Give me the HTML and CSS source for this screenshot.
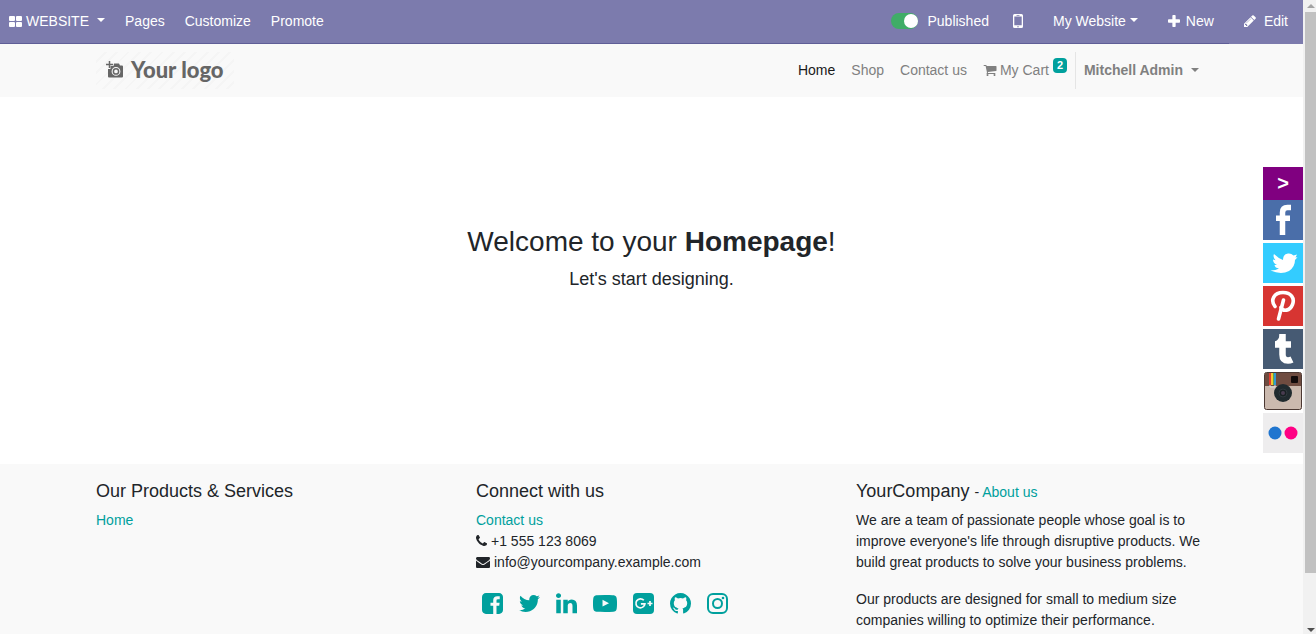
FILE: index.html
```html
<!DOCTYPE html>
<html lang="en">
<head>
<meta charset="utf-8">
<title>Home | My Website</title>
<link rel="stylesheet" href="styles.css">
</head>
<body>
<div class="page">
  <header class="topbar">
    <nav class="topbar-menu" aria-label="Website menu">
      <button class="top-link brand" type="button">
        <svg width="13" height="11" viewBox="0 0 13 11" fill="currentColor"><rect width="6" height="5" rx="1"/><rect x="7" width="6" height="5" rx="1"/><rect y="6" width="6" height="5" rx="1"/><rect x="7" y="6" width="6" height="5" rx="1"/></svg>
        WEBSITE <span class="caret caret-spaced"></span>
      </button>
      <a class="top-link" href="#">Pages</a>
      <a class="top-link" href="#">Customize</a>
      <a class="top-link" href="#">Promote</a>
    </nav>
    <div class="topbar-tools">
      <label class="publish"><input class="switch" type="checkbox" checked>Published</label>
      <button class="tool" type="button" aria-label="Mobile preview">
        <svg width="10" height="14" viewBox="0 0 10 14"><path fill="currentColor" fill-rule="evenodd" d="M1.500 0h7Q10 0 10 1.500v11Q10 14 8.500 14h-7Q0 14 0 12.500v-11Q0 0 1.500 0zM1.300 2.500v8.800h7.400V2.500zM3.500 1v.7h3V1zM5 12a.7.7 0 100 1.400.7.7 0 000-1.400z"/></svg>
      </button>
      <button class="tool" type="button">My Website<span class="caret"></span></button>
      <button class="tool tool-new" type="button">
        <svg width="12" height="12" viewBox="192 128 1408 1408" fill="currentColor"><path d="M1600 736v192q0 40-28 68t-68 28h-416v416q0 40-28 68t-68 28h-192q-40 0-68-28t-28-68v-416h-416q-40 0-68-28t-28-68v-192q0-40 28-68t68-28h416v-416q0-40 28-68t68-28h192q40 0 68 28t28 68v416h416q40 0 68 28t28 68z"/></svg>
        New
      </button>
      <button class="tool tool-edit" type="button">
        <svg width="13" height="14" viewBox="128 0 1664 1792" fill="currentColor"><path d="M491 1536l91-91-235-235-91 91v107h128v128h107zm523-928q0-22-22-22-10 0-17 7l-542 542q-7 7-7 17 0 22 22 22 10 0 17-7l542-542q7-7 7-17zm-54-192l416 416-832 832h-416v-416zm683 96q0 53-37 90l-166 166-416-416 166-165q36-38 90-38 53 0 91 38l235 234q37 39 37 91z"/></svg>
        Edit
      </button>
    </div>
  </header>

  <div class="site-header">
    <div class="container site-nav">
      <a class="logo" href="#">
        <svg width="18" height="18" viewBox="0 0 18 18"><path d="M3.500 0v7M0 3.500h7" stroke="currentColor" stroke-width="1.500"/><path fill="currentColor" fill-rule="evenodd" d="M8 2.500h5l1 2h2q1 0 1 1v10q0 1-1 1H3q-1 0-1-1V8h2.500V5H7.500zM10 6a4.400 4.400 0 100 8.800 4.400 4.400 0 000-8.800z"/><circle cx="10" cy="10.400" r="2.600" fill="none" stroke="currentColor" stroke-width="1.500"/></svg>
        Your logo
      </a>
      <nav class="nav-links" aria-label="Site">
        <a class="nav-link active" href="#">Home</a>
        <a class="nav-link" href="#">Shop</a>
        <a class="nav-link" href="#">Contact us</a>
        <a class="nav-link cart" href="#">
          <svg width="14" height="14" viewBox="0 0 1792 1792" fill="currentColor"><path d="M704 1536q0 52-38 90t-90 38-90-38-38-90 38-90 90-38 90 38 38 90zm896 0q0 52-38 90t-90 38-90-38-38-90 38-90 90-38 90 38 38 90zm128-1088v512q0 24-16.500 42.500t-40.500 21.500l-1044 122q13 60 13 70 0 16-24 64h920q26 0 45 19t19 45-19 45-45 19h-1024q-26 0-45-19t-19-45q0-11 8-31.500t16-36 21.500-40 15.500-29.500l-177-823h-204q-26 0-45-19t-19-45 19-45 45-19h256q16 0 28.500 6.500t19.500 15.500 13 24.500 8 26 5.500 29.500 4.500 26h1201q26 0 45 19t19 45z"/></svg>
          My Cart <span class="badge">2</span>
        </a>
        <button class="nav-link user" type="button">Mitchell Admin<span class="caret caret-spaced"></span></button>
      </nav>
    </div>
  </div>

  <main class="hero">
    <h1 class="hero-title">Welcome to your <strong>Homepage</strong>!</h1>
    <p class="hero-lead">Let's start designing.</p>
  </main>

  <footer class="footer">
    <div class="container footer-grid">
      <section>
        <h2 class="footer-title">Our Products &amp; Services</h2>
        <a class="link" href="#">Home</a>
      </section>
      <section>
        <h2 class="footer-title">Connect with us</h2>
        <ul class="contact">
          <li><a class="link" href="#">Contact us</a></li>
          <li><svg width="11" height="14" viewBox="192 128 1408 1792" fill="currentColor"><path d="M1600 1240q0 27-10 70.500t-21 68.500q-21 50-122 106-94 51-186 51-27 0-53-3.500t-57.500-12.500-47-14.500-55.500-20.500-49-18q-98-35-175-83-127-79-264-216t-216-264q-48-77-83-175-3-9-18-49t-20.500-55.500-14.500-47-12.500-57.500-3.500-53q0-92 51-186 56-101 106-122 25-11 68.500-21t70.500-10q14 0 21 3 18 6 53 76 11 19 30 54t35 63.500 31 53.500q3 4 17.500 25t21.500 35.500 7 28.500q0 20-28.500 50t-62 55-62 53-28.500 46q0 9 5 22.500t8.500 20.500 14 24 11.500 19q76 137 174 235t235 174q2 1 19 11.500t24 14 20.500 8.500 22.500 5q18 0 46-28.500t53-62 55-62 50-28.500q14 0 28.500 7t35.500 21.500 25 17.500q25 15 53.500 31t63.500 35 54 30q70 35 76 53 3 7 3 21z"/></svg>+1 555 123 8069</li>
          <li><svg width="14" height="14" viewBox="0 128 1792 1792" fill="currentColor"><path d="M1792 710v794q0 66-47 113t-113 47h-1472q-66 0-113-47t-47-113v-794q44 49 101 87 362 246 497 345 57 42 92.500 65.500t94.500 48 110 24.500h2q51 0 110-24.500t94.500-48 92.500-65.500q170-123 498-345 57-39 100-87zm0-294q0 79-49 151t-122 123q-376 261-468 325-10 7-42.500 31t-54 38.500-52 32.500-57.500 27-50 9h-2q-23 0-50-9t-57.500-27-52-32.500-54-38.500-42.500-31q-91-64-262-182.500t-205-142.500q-62-42-117-115.500t-55-136.500q0-78 41.500-130t118.500-52h1472q65 0 112.500 47t47.500 113z"/></svg>info@yourcompany.example.com</li>
        </ul>
        <div class="social">
          <a href="#" aria-label="Facebook"><svg width="21" height="25" viewBox="128 0 1536 1792"><path d="M1376 128q119 0 203.500 84.500t84.500 203.500v960q0 119-84.500 203.500t-203.500 84.500h-188v-595h199l30-232h-229v-148q0-56 23.500-84t91.500-28l122-1v-207q-63-9-178-9-136 0-217.500 80t-81.500 226v171h-200v232h200v595h-532q-119 0-203.500-84.500t-84.500-203.500v-960q0-119 84.500-203.500t203.500-84.500h960z"/></svg></a>
          <a href="#" aria-label="Twitter"><svg width="21" height="25" viewBox="108 0 1576 1792"><path d="M1684 408q-67 98-162 167 1 14 1 42 0 130-38 259.500t-115.500 248.500-184.500 210.500-258 146-323 54.500q-271 0-496-145 35 4 78 4 225 0 401-138-105-2-188-64.500t-114-159.500q33 5 61 5 43 0 85-11-112-23-185.500-111.500t-73.500-205.500v-4q68 38 146 41-66-44-105-115t-39-154q0-88 44-163 121 149 294.500 238.500t371.500 99.500q-8-38-8-74 0-134 94.500-228.500t228.500-94.500q140 0 236 102 109-21 205-78-37 115-142 178 93-10 186-50z"/></svg></a>
          <a href="#" aria-label="LinkedIn"><svg width="21" height="25" viewBox="128 0 1536 1792"><path d="M477 625v991h-330v-991h330zm21-306q1 73-50.500 122t-135.500 49h-2q-82 0-132-49t-50-122q0-74 51.500-122.500t134.500-48.500 133 48.500 51 122.500zm1166 729v568h-329v-530q0-105-40.500-164.500t-126.500-59.500q-63 0-105.500 34.500t-63.500 85.500q-11 30-11 81v553h-329q2-399 2-647t-1-296l-1-48h329v144h-2q20-32 41-56t56.500-52 87-43.500 114.500-15.500q171 0 275 113.500t104 332.500z"/></svg></a>
          <a href="#" aria-label="YouTube"><svg width="24" height="25" viewBox="0 0 1792 1792"><path d="M711 1128l484-250-484-253v503zm185-862q168 0 324.500 4.500t229.500 9.500l73 4q1 0 17 1.500t23 3 23.500 4.500 28.500 8 28 13 31 19.500 29 26.500q6 6 15.500 18.500t29 58.500 26.500 101q8 64 12.500 136.500t5.500 113.500v176q1 145-18 290-7 55-25 99.500t-32 61.500l-14 17q-14 15-29 26.500t-31 19-28 12.500-28.500 8-24 4.500-23 3-16.500 1.500q-251 19-627 19-207-2-359.500-6.500t-200.500-7.500l-49-4-36-4q-36-5-54.500-10t-51-21-56.500-41q-6-6-15.500-18.500t-29-58.500-26.500-101q-8-64-12.500-136.500t-5.500-113.500v-176q-1-145 18-290 7-55 25-99.500t32-61.500l14-17q14-15 29-26.500t31-19.500 28-13 28.500-8 23.500-4.500 23-3 17-1.500q251-18 627-18z"/></svg></a>
          <a href="#" aria-label="Google Plus"><svg width="21" height="25" viewBox="0 0 21 25"><rect y="2" width="21" height="21" rx="4"/><path d="M10.800 9.300a4.500 4.500 0 10 1.100 3.500H7.900M17 10v5M14.500 12.500h5" fill="none" stroke="#f9f9f9" stroke-width="1.700"/></svg></a>
          <a href="#" aria-label="GitHub"><svg width="21" height="25" viewBox="128 0 1536 1792"><path d="M896 128q209 0 385.500 103t279.500 279.500 103 385.500q0 251-146.500 451.500t-378.500 277.500q-27 5-40-7t-13-30q0-3 .5-76.500t.5-134.500q0-97-52-142 57-6 102.500-18t94-39 81-66.500 53-105 20.500-150.500q0-119-79-206 37-91-8-204-28-9-81 11t-92 44l-38 24q-93-26-192-26t-192 26q-16-11-42.500-27t-83.500-38.500-85-13.500q-45 113-8 204-79 87-79 206 0 85 20.500 150t52.500 105 80.500 67 94 39 102.500 18q-39 36-49 103-21 10-45 15t-57 5-65.500-21.500-55.500-62.500q-19-32-48.500-52t-49.500-24l-20-3q-21 0-29 4.500t-5 11.500 9 14 13 12l7 5q22 10 43.500 38t31.500 51l10 23q13 38 44 61.500t67 30 69.500 7 55.500-3.500l23-4q0 38 .5 88.500t.5 54.500q0 18-13 30t-40 7q-232-77-378.500-277.500t-146.500-451.500q0-209 103-385.500t279.500-279.500 385.500-103z"/></svg></a>
          <a href="#" aria-label="Instagram"><svg width="21" height="25" viewBox="0 0 21 25"><g fill="none" stroke="currentColor" stroke-width="2"><rect x="1" y="3" width="19" height="19" rx="5"/><circle cx="10.500" cy="12.500" r="4.500"/></g><circle cx="16" cy="7" r="1.300"/></svg></a>
        </div>
      </section>
      <section>
        <h2 class="footer-title">YourCompany <small class="about">- <a class="link" href="#">About us</a></small></h2>
        <p class="footer-text">We are a team of passionate people whose goal is to improve everyone's life through disruptive products. We build great products to solve your business problems.</p>
        <p class="footer-text">Our products are designed for small to medium size companies willing to optimize their performance.</p>
      </section>
    </div>
  </footer>

  <aside class="share" aria-label="Share">
    <button class="share-toggle" type="button">&gt;</button>
    <a href="#" aria-label="Facebook"><svg width="40" height="40" viewBox="0 0 40 40"><rect width="40" height="40" fill="#4a6ea9"/><path d="M28 7.500h-3.500Q19.500 7.500 19.500 12.500V35M13 18.200h14" fill="none" stroke="#fff" stroke-width="5.500"/></svg></a>
    <a href="#" aria-label="Twitter"><svg width="40" height="40" viewBox="0 0 40 40"><rect width="40" height="40" fill="#33ccff"/><path fill="#fff" d="M11 11Q15 15 20 17Q20 11 25 10.500Q28 10 30.500 12.500L34 11.500L32.500 14.500L34.500 14.300L32 17Q32 24 26 28Q18 32 7.500 27.500Q13 27.500 16 25.500Q12 25 11.500 22H14Q10 20 10 16.500L12.500 17.300Q9.500 14 11 11z"/></svg></a>
    <a href="#" aria-label="Pinterest"><svg width="40" height="40" viewBox="0 0 40 40"><rect width="40" height="40" fill="#d73532"/><g fill="none" stroke="#fff" stroke-width="3.600" stroke-linecap="round"><path d="M12 20.500C7 14 11 6.500 20 6.500C28 6.500 32 12 29.500 18.500C27 25 20 26 18 21.500"/><path d="M20.500 14L15.500 33"/></g></svg></a>
    <a href="#" aria-label="Tumblr"><svg width="40" height="40" viewBox="0 0 40 40"><rect width="40" height="40" fill="#465a73"/><path d="M19.500 5v20.500q0 6 5.500 6 2 0 4-1M12 15.500h16" fill="none" stroke="#fff" stroke-width="6.500"/><path fill="#fff" d="M17 5Q16 11 12 12.500v3h6z"/></svg></a>
    <a href="#" aria-label="Instagram"><svg width="40" height="38" viewBox="0 1 40 38"><rect x="1.500" y="1.500" width="37" height="37" rx="2" fill="#cbb9ae" stroke="#4b3832"/><path d="M2 2h36v13H2z" fill="#6f4c40"/><path fill="#e13b30" d="M6 2h2v12H6z"/><path fill="#f5c432" d="M8 2h2v12H8z"/><path fill="#5aab4b" d="M10 2h1v12h-1z"/><path fill="#3498d0" d="M11 2h2v12h-2z"/><path fill="none" stroke="#ddd" d="M7 14v2h5v-2"/><rect x="28" y="5" width="7" height="7" rx="1" fill="#120b0b"/><circle cx="20" cy="22" r="9" fill="#202a2e"/><circle cx="20" cy="22" r="4" fill="#182022" stroke="#30393f"/><circle cx="20" cy="22" r="2" fill="#493c50"/></svg></a>
    <a href="#" aria-label="Flickr"><svg width="40" height="40" viewBox="0 0 40 40"><rect width="40" height="40" fill="#eeedee"/><circle cx="12" cy="20" r="6.500" fill="#1f75cf"/><circle cx="28" cy="20" r="6.500" fill="#ff0084"/></svg></a>
  </aside>
</div>
<div class="scrollbar" aria-hidden="true"><span class="arrow-up"></span><span class="thumb"></span><span class="arrow-down"></span></div>
</body>
</html>
```
FILE: styles.css
```css
* { box-sizing: border-box; }
body { margin: 0; height: 100vh; display: flex; overflow: hidden; font: 14px/21px "Liberation Sans", Arial, sans-serif; color: #212529; background: #fff; }
h1, h2, p, ul { margin: 0; padding: 0; font-weight: 400; }
ul { list-style: none; }
a { text-decoration: none; color: inherit; }
button { font: inherit; color: inherit; background: none; border: 0; padding: 0; cursor: pointer; }
svg { display: block; flex: none; }
.page { position: relative; flex: 1; min-width: 0; overflow: hidden; }
.container { max-width: 1141px; margin: 0 auto; padding: 0 15px; }
.caret { margin: 0 0 2px 4px; border: 4px solid transparent; border-top-color: currentColor; border-bottom: 0; }
.caret-spaced { margin-left: 8px; }

.topbar { display: flex; justify-content: space-between; height: 44px; color: #fff; background: #7c7bad; box-shadow: inset 0 -1px #5f5e97; }
.topbar-menu { display: flex; gap: 20px; padding: 0 9px; }
.topbar-tools { display: flex; }
.top-link, .tool, .publish { display: flex; align-items: center; padding-bottom: 2px; }
.brand svg { margin-right: 4px; }
.tool { padding: 0 15px 2px; }
.tool-new { gap: 6px; }
.tool-edit { gap: 7px; background: #7c7bad; }
.publish { gap: 9px; padding-right: 9px; }
.switch { appearance: none; display: flex; justify-content: flex-end; width: 27px; height: 16px; margin: 0; border-radius: 8px; background: #40ad67; }
.switch::before { content: ""; width: 14px; height: 14px; margin: 1px 0; border-radius: 50%; background: #fff; }

.site-header { background: #f9f9f9; }
.site-nav { display: flex; justify-content: space-between; align-items: center; padding-top: 8px; padding-bottom: 8px; }
.logo { display: flex; align-items: center; gap: 7px; height: 37px; padding: 0 10px 2px; color: #666; font: 900 22px/35px Lato, sans-serif; background: repeating-linear-gradient(135deg, #f9f9f9 0 6px, #f5f5f5 6px 8px); }
.nav-links { display: flex; }
.nav-link { display: flex; align-items: center; padding: 0 8px; color: #808080; }
.active { color: #1a1a1a; }
.cart svg { margin: 0 3px 2px 0; }
.badge { align-self: flex-start; min-width: 14px; height: 15px; margin: 6px 0 0 4px; border-radius: 4px; text-align: center; color: #fff; background: #00a09d; font: 700 11px/15px "Liberation Sans", Arial, sans-serif; }
.user { height: 37px; border-left: 1px solid #e5e5e5; font-weight: 700; }

.hero { padding: 128px 15px 171px; text-align: center; }
.hero-title { font-size: 28px; line-height: 34px; margin-bottom: 7px; }
.hero-lead { font-size: 18px; line-height: 27px; }

.footer { background: #f9f9f9; padding: 16px 0 32px; }
.footer-grid { display: grid; grid-template-columns: repeat(3, 1fr); gap: 29px; }
.footer-title { font-size: 18px; line-height: 22px; margin-bottom: 8px; }
.about { font-size: 14px; line-height: 14px; }
.link { color: #00a09d; }
.contact li { display: flex; align-items: center; gap: 4px; }
.social { display: flex; gap: 16px; margin-top: 18px; padding-left: 6px; color: #00a09d; fill: currentColor; }
.footer-text { margin-bottom: 16px; }

.share { position: absolute; top: 167px; right: 0; width: 40px; display: flex; flex-direction: column; gap: 3px; }
.share-toggle { height: 33px; margin-bottom: -3px; color: #fff; background: #800080; font: 700 20px/33px "Liberation Sans", Arial, sans-serif; }

.scrollbar { display: flex; flex-direction: column; align-items: center; gap: 4px; width: 13px; padding: 4px 0 2px 2px; background: #f1f1f1; }
.arrow-up { border: 4px solid transparent; border-bottom-color: #a3a3a3; border-top: 0; }
.thumb { flex: 1; width: 100%; margin-bottom: 51px; background: #c1c1c1; }
.arrow-down { border: 4px solid transparent; border-top-color: #505050; border-bottom: 0; }
```
